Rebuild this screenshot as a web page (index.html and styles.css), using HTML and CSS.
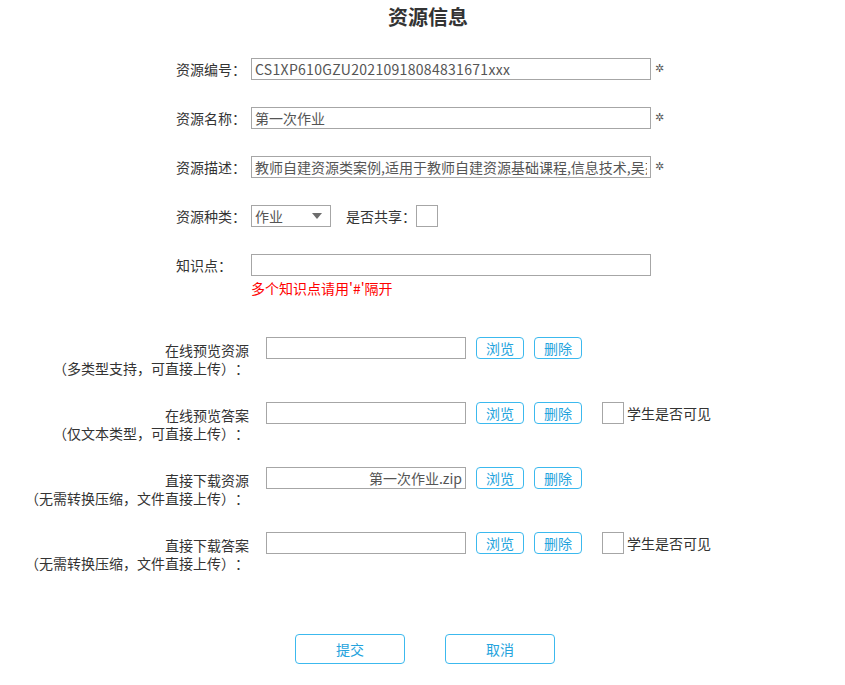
FILE: index.html
```html
<!DOCTYPE html>
<html lang="zh-CN">
<head>
<meta charset="utf-8">
<title>资源信息</title>
<link rel="stylesheet" href="styles.css">
</head>
<body>
<div class="page">
  <h1 class="title">资源信息</h1>

  <div class="basic">
    <div class="row">
      <span class="label">资源编号：</span>
      <input class="text text-code" type="text" value="CS1XP610GZU20210918084831671xxx">
      <span class="req">✲</span>
    </div>
    <div class="row">
      <span class="label">资源名称：</span>
      <input class="text" type="text" value="第一次作业">
      <span class="req">✲</span>
    </div>
    <div class="row">
      <span class="label">资源描述：</span>
      <input class="text" type="text" value="教师自建资源类案例,适用于教师自建资源基础课程,信息技术,吴杰">
      <span class="req">✲</span>
    </div>
    <div class="row">
      <span class="label">资源种类：</span>
      <div class="select"><span class="select-val">作业</span><span class="caret"></span></div>
      <span class="share-label">是否共享：</span>
      <span class="check"></span>
    </div>
    <div class="row row-kp">
      <span class="label">知识点：</span>
      <div class="kp">
        <input class="text" type="text" value="">
        <div class="hint">多个知识点请用'#'隔开</div>
      </div>
    </div>
  </div>

  <div class="files">
    <div class="frow">
      <div class="flabel"><div class="fl1">在线预览资源</div><div class="fl2">（多类型支持，可直接上传）：</div></div>
      <input class="ftext" type="text" value="">
      <span class="btn">浏览</span>
      <span class="btn">删除</span>
    </div>
    <div class="frow">
      <div class="flabel"><div class="fl1">在线预览答案</div><div class="fl2">（仅文本类型，可直接上传）：</div></div>
      <input class="ftext" type="text" value="">
      <span class="btn">浏览</span>
      <span class="btn">删除</span>
      <span class="check check-vis"></span>
      <span class="vis-label">学生是否可见</span>
    </div>
    <div class="frow">
      <div class="flabel"><div class="fl1">直接下载资源</div><div class="fl2">（无需转换压缩，文件直接上传）：</div></div>
      <input class="ftext ftext-right" type="text" value="第一次作业.zip">
      <span class="btn">浏览</span>
      <span class="btn">删除</span>
    </div>
    <div class="frow">
      <div class="flabel"><div class="fl1">直接下载答案</div><div class="fl2">（无需转换压缩，文件直接上传）：</div></div>
      <input class="ftext" type="text" value="">
      <span class="btn">浏览</span>
      <span class="btn">删除</span>
      <span class="check check-vis"></span>
      <span class="vis-label">学生是否可见</span>
    </div>
  </div>

  <div class="actions">
    <span class="big-btn">提交</span>
    <span class="big-btn">取消</span>
  </div>
</div>
</body>
</html>
```

FILE: styles.css
```css
* { box-sizing: border-box; }
html, body { margin: 0; padding: 0; background: #fff; }
body {
  font-family: "Noto Sans CJK SC", "Microsoft YaHei", sans-serif;
  font-size: 14px;
  color: #333;
  width: 845px;
  height: 685px;
  overflow: hidden;
  text-spacing-trim: space-all;
}
.page { display: flex; flex-direction: column; }

.title {
  margin: 3px 0 0;
  padding-left: 11px;
  text-align: center;
  font-size: 20px;
  line-height: 28px;
  font-weight: 700;
  color: #333;
}

.basic {
  display: flex;
  flex-direction: column;
  gap: 27px;
  padding-left: 176px;
  margin-top: 27px;
}
.row {
  display: flex;
  align-items: center;
  height: 22px;
}
.row-kp { align-items: flex-start; height: auto; }
.row-kp .label { line-height: 22px; }
.label {
  width: 75px;
  flex: none;
  font-size: 14px;
  line-height: 22px;
  color: #333;
  white-space: nowrap;
}
.text {
  width: 400px;
  height: 22px;
  border: 1px solid #a6a6a6;
  padding: 0 3px;
  margin: 0;
  font-family: "Noto Sans CJK SC", sans-serif;
  font-size: 14px;
  color: #555;
  background: #fff;
  outline: none;
  text-spacing-trim: space-all;
}
.text-code { letter-spacing: 0.3px; }
.req {
  margin-left: 4px;
  font-family: "DejaVu Sans", sans-serif;
  font-size: 11px;
  font-weight: 700;
  color: #555;
  line-height: 22px;
}
.select {
  width: 80px;
  height: 22px;
  border: 1px solid #a6a6a6;
  display: flex;
  align-items: center;
  justify-content: space-between;
  padding: 0 8px 0 3px;
  color: #555;
}
.select-val { line-height: 20px; }
.caret {
  width: 0;
  height: 0;
  border-left: 5px solid transparent;
  border-right: 5px solid transparent;
  border-top: 6px solid #6d6d6d;
}
.share-label { margin-left: 15px; line-height: 22px; white-space: nowrap; }
.check {
  width: 22px;
  height: 22px;
  border: 1px solid #a6a6a6;
  background: #fff;
  flex: none;
}
.kp { display: flex; flex-direction: column; }
.hint {
  margin-top: 2px;
  color: #f00;
  font-size: 14px;
  line-height: 20px;
}

.files {
  display: flex;
  flex-direction: column;
  gap: 25px;
  margin-top: 39px;
}
.frow {
  display: flex;
  align-items: flex-start;
}
.flabel {
  width: 249px;
  flex: none;
  text-align: right;
  padding-top: 4px;
  line-height: 18px;
  font-size: 14px;
  color: #333;
  white-space: nowrap;
}
.ftext {
  margin: 0 0 0 17px;
  width: 200px;
  height: 22px;
  border: 1px solid #a6a6a6;
  padding: 0 3px;
  font-family: "Noto Sans CJK SC", sans-serif;
  font-size: 14px;
  color: #555;
  background: #fff;
  outline: none;
}
.ftext-right { text-align: right; }
.btn {
  margin-left: 10px;
  width: 48px;
  height: 22px;
  border: 1px solid #3cb9ee;
  border-radius: 4px;
  color: #24a3dd;
  font-size: 14px;
  line-height: 20px;
  text-align: center;
  flex: none;
}
.check-vis { margin-left: 20px; }
.vis-label { margin-left: 3px; line-height: 22px; color: #333; }

.actions {
  display: flex;
  justify-content: center;
  gap: 40px;
  margin-top: 62px;
  padding-left: 5px;
}
.big-btn {
  width: 110px;
  height: 30px;
  border: 1px solid #3cb9ee;
  border-radius: 4px;
  color: #24a3dd;
  font-size: 14px;
  line-height: 28px;
  text-align: center;
}
```
